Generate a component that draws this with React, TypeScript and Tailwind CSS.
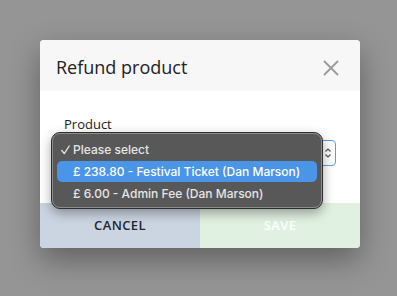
import React from "react";

export default function App() {
  return (
    <div className="w-[397px] h-[296px] bg-[#959595] overflow-hidden pt-[40px] pl-[40px]" style={{ fontFamily: '"Open Sans", "Noto Sans", sans-serif' }}>
      <div className="relative w-[320px] rounded-[4px] bg-white shadow-[0_12px_30px_rgba(0,0,0,0.35)]">
        <div className="h-[51px] bg-[#f7f7f7] rounded-t-[4px] flex items-center justify-between pl-[16px] pr-[21px]">
          <span className="text-[18px] text-[#222] leading-none mt-[2px]">Refund product</span>
          <svg width="16" height="16" viewBox="0 0 16 16" className="mt-[5px]">
            <path d="M1.5 1.5 L14.5 14.5 M14.5 1.5 L1.5 14.5" stroke="#9a9a9a" strokeWidth="1.8" strokeLinecap="round" />
          </svg>
        </div>
        <div className="h-[112px] pt-[25px] pl-[24px] pr-[24px]">
          <div className="text-[13px] text-[#222] leading-[16px]">Product</div>
          <div className="mt-[8px] ml-[-8px] h-[26px] w-[280px] border border-[#5b9fe3] rounded-[4px] flex items-center justify-end pr-[3px]">
            <svg width="8" height="12" viewBox="0 0 8 12">
              <path d="M1.5 4.5 L4 2 L6.5 4.5 M1.5 7.5 L4 10 L6.5 7.5" stroke="#555" strokeWidth="1.2" fill="none" />
            </svg>
          </div>
        </div>
        <div className="flex h-[45px]">
          <div className="w-[160px] bg-[#cbd4e1] rounded-bl-[4px] flex items-center justify-center text-[13px] font-semibold tracking-[0.4px] text-[#1e2733]">CANCEL</div>
          <div className="w-[160px] bg-[#e0f0e1] rounded-br-[4px] flex items-center justify-center text-[13px] font-semibold tracking-[0.4px] text-white">SAVE</div>
        </div>
        <div
          className="absolute left-[11px] top-[92px] w-[272px] h-[77px] rounded-[9px] border border-[#2e2e2e] bg-[#585858] shadow-[0_4px_12px_rgba(0,0,0,0.35)]"
          style={{ fontFamily: 'Inter, "Noto Sans", sans-serif' }}
        >
          <div className="h-full rounded-[8px] border border-[#8c8c8c] px-[4px] pt-[5px] text-[12px] font-medium text-[#e6e6e6]">
            <div className="h-[22px] flex items-center pl-[4px]">
              <span className="w-[12px] flex items-center">
                <svg width="9" height="10" viewBox="0 0 9 10">
                  <path d="M0.8 5.5 L3.3 8.6 L8.2 1" stroke="#e6e6e6" strokeWidth="1.3" fill="none" strokeLinecap="round" strokeLinejoin="round" />
                </svg>
              </span>
              <span>Please select</span>
            </div>
            <div className="h-[21px] flex items-center pl-[16px] bg-[#4b95e8] rounded-[5px] text-white">£ 238.80 - Festival Ticket (Dan Marson)</div>
            <div className="h-[23px] flex items-center pl-[16px]">£ 6.00 - Admin Fee (Dan Marson)</div>
          </div>
        </div>
      </div>
    </div>
  );
}
